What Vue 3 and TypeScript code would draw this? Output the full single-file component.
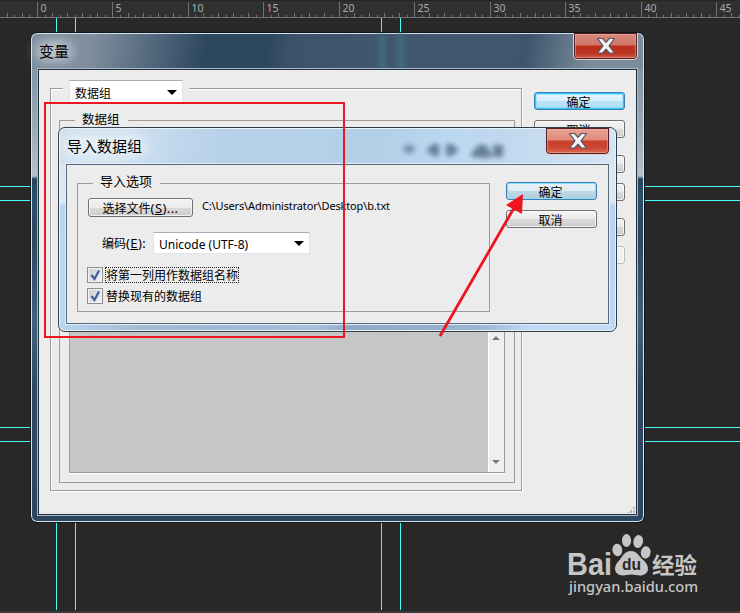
<script setup lang="ts">
import { ref } from 'vue';

interface Tick {
  x: number;
  y: number;
  label?: string;
}

const UNIT = 15.09;
const ORIGIN = 37.5;

const ticks: Tick[] = [];
for (let i = -4; i <= 93; i++) {
  const x = Math.floor(ORIGIN + (i * UNIT) / 2) + 0.5;
  if (i >= 0 && i % 10 === 0) {
    ticks.push({ x, y: 1, label: String(i / 2) });
  } else {
    ticks.push({ x, y: i % 2 === 0 ? 12 : 14 });
  }
}

const columns = [56, 75, 381, 400];
const rows = [186, 200, 427, 441];

const useFirstColumn = ref(true);
const replaceExisting = ref(true);
</script>

<template>
  <div class="desktop">
    <svg class="ruler" width="740" height="18">
      <g v-for="tick in ticks" :key="tick.x">
        <line :x1="tick.x" :x2="tick.x" :y1="tick.y" y2="17" stroke="#737373" />
        <text v-if="tick.label" :x="tick.x + 3" y="11">{{ tick.label }}</text>
      </g>
    </svg>

    <i v-for="x in columns" :key="'c' + x" class="guide guide-v" :style="{ left: x + 'px' }" />
    <i v-for="y in rows" :key="'r' + y" class="guide guide-h" :style="{ top: y + 'px' }" />

    <section class="window variables">
      <i class="glow glow-a" />
      <i class="glow glow-b" />
      <header class="titlebar"><i class="halo" /><span>变量</span></header>
      <button class="close" aria-label="close">
        <svg width="20" height="18" viewBox="0 0 20 18">
          <path d="M1.5 1.5h5.2L10 5.4l3.300-3.900h5.200L13 8.800l5.500 7.200h-5.200L10 12.100 6.700 16H1.500L7 8.800z" fill="#f4f4f4" stroke="#545465" stroke-width="1.200" stroke-linejoin="round" />
        </svg>
      </button>
      <div class="client">
        <div class="group group-outer">
          <div class="legend legend-select">
            <div class="select">数据组<i class="caret" /></div>
          </div>
          <div class="group group-inner">
            <div class="legend legend-inner">数据组</div>
            <div class="list">
              <div class="list-body" />
              <div class="scrollbar">
                <i class="arrow-up" />
                <i class="arrow-down" />
              </div>
            </div>
          </div>
        </div>
        <div class="actions">
          <button class="btn btn-active">确定</button>
          <button class="btn">取消</button>
          <button class="btn spaced" />
          <button class="btn" />
          <button class="btn spaced" />
          <button class="btn" disabled />
        </div>
        <svg class="grip" width="16" height="16">
          <path d="M13 9h2v2h-2zM10 12h2v2h-2zM13 12h2v2h-2zM7 14h2v1h-2zM10 14h2v1h-2zM13 14h2v1h-2z" fill="#b9b9b9" />
        </svg>
      </div>
    </section>

    <section class="window import">
      <svg class="smudges" width="140" height="34">
        <g fill="#5d7690">
          <path d="M19 20l4-4h6l4 4-4 4h-6z" opacity=".8" />
          <path d="M43 21l7-6h6v12h-6zM76 21l-7-6h-6v12h6z" />
          <path d="M88 24l9-9 7 2 6 11-9 1-12-1zM110 16h10v12h-10z" />
        </g>
      </svg>
      <header class="titlebar"><i class="halo" /><span>导入数据组</span></header>
      <button class="close" aria-label="close">
        <svg width="20" height="18" viewBox="0 0 20 18">
          <path d="M1.5 1.5h5.2L10 5.4l3.300-3.900h5.200L13 8.800l5.500 7.200h-5.200L10 12.100 6.700 16H1.500L7 8.800z" fill="#f4f4f4" stroke="#545465" stroke-width="1.200" stroke-linejoin="round" />
        </svg>
      </button>
      <div class="client">
        <div class="group group-import">
          <div class="legend legend-import">导入选项</div>
          <div class="row file-row">
            <button class="btn btn-file">选择文件<b>(<u>S</u>)...</b></button>
            <span class="path">C:\Users\Administrator\Desktop\b.txt</span>
          </div>
          <div class="row encoding-row">
            <span class="label">编码<b>(<u>E</u>):</b></span>
            <div class="select">Unicode (UTF-8)<i class="caret" /></div>
          </div>
          <label class="row check-row">
            <input v-model="useFirstColumn" type="checkbox">
            <svg class="box" width="16" height="16"><path v-if="useFirstColumn" d="M3.500 7l3 4L11 2.500" /></svg>
            <span class="focused">将第一列用作数据组名称</span>
          </label>
          <label class="row check-row second">
            <input v-model="replaceExisting" type="checkbox">
            <svg class="box" width="16" height="16"><path v-if="replaceExisting" d="M3.500 7l3 4L11 2.500" /></svg>
            <span>替换现有的数据组</span>
          </label>
        </div>
        <div class="actions">
          <button class="btn btn-hot">确定</button>
          <button class="btn">取消</button>
        </div>
      </div>
    </section>

    <svg class="marks" width="740" height="613">
      <rect x="45" y="103" width="299" height="234" fill="none" stroke="#ed1520" stroke-width="2" />
      <path d="M440 336L514 208" stroke="#ed1520" stroke-width="2.800" />
      <path d="M523 194l-17 11 16 9z" fill="#ed1520" />
    </svg>

    <svg class="watermark" width="140" height="70">
      <g fill="#c6c6c6">
        <text x="1" y="42.500" class="brand" textLength="45" lengthAdjust="spacingAndGlyphs">Bai</text>
        <ellipse cx="51.300" cy="18" rx="4.900" ry="6.300" transform="rotate(-8 51 18)" />
        <ellipse cx="60.500" cy="8.500" rx="4.600" ry="6.500" />
        <ellipse cx="72.200" cy="9.500" rx="4.800" ry="6.500" transform="rotate(12 72 9.500)" />
        <ellipse cx="79.700" cy="20.500" rx="4.900" ry="6.200" transform="rotate(8 80 20)" />
        <path d="M65 19c6 0 8 5 11 8 4 3 6 6 6 10 0 4-4 6.500-8 6.500-3 0-5-1-8.500-1s-5.500 1-8.500 1c-5 0-8-3-8-7 0-3 2-6 5-9 3-4 5-8.500 11-8.500z" />
        <text x="56" y="38" class="du" textLength="19" lengthAdjust="spacingAndGlyphs">du</text>
        <text x="86" y="41" class="cn" textLength="45" lengthAdjust="spacingAndGlyphs">经验</text>
        <text x="3" y="60" class="site" textLength="129" lengthAdjust="spacingAndGlyphs">jingyan.baidu.com</text>
      </g>
    </svg>
  </div>
</template>

<style>
body {
  margin: 0;
  background: #282828;
}
</style>

<style scoped>
.desktop {
  position: relative;
  box-sizing: border-box;
  width: 740px;
  height: 613px;
  overflow: hidden;
  background: #282828;
  border-bottom: 2px solid #393737;
  font-family: "Noto Sans", "Noto Sans CJK SC", sans-serif;
  font-size: 12px;
  color: #000;
}

.desktop * {
  box-sizing: border-box;
}

.ruler {
  display: block;
  background: #303030;
  border-top: 1px solid #262626;
  border-bottom: 1px solid #737373;
}

.ruler text {
  font: 10.5px "Noto Sans", sans-serif;
  fill: #ababab;
}

.guide {
  position: absolute;
  background: #48fafa;
}

.guide-v {
  top: 18px;
  width: 1px;
  height: 592px;
}

.guide-h {
  left: 0;
  width: 740px;
  height: 1px;
}

.window {
  position: absolute;
  display: flex;
  flex-direction: column;
  border: 1px solid #0c141c;
  border-radius: 7px;
}

.variables {
  left: 30px;
  top: 32px;
  width: 615px;
  height: 491px;
  box-shadow: inset 0 0 0 1px #d5e3ee;
  background:
    linear-gradient(100deg, #7b8c9d 0, #808f9e 60px, #6a7c8f 90px, #2d475f 175px, #2d475f 235px, #3c536b 260px, #43586f 400px, #43586f 470px, #3d546c 490px, #7b8c9c 555px, #7b8c9c 100%) 0 0 / 100% 36px no-repeat,
    linear-gradient(#76889a 0, #9aa9b6 95px, #b5c0ca 143px, #24455c 146px, #2c5069 165px, #2b465f 200px, #41617d 290px, #2d4760 360px, #2c465f 100%);
}

.import {
  left: 58px;
  top: 127px;
  width: 559px;
  height: 205px;
  border-color: #303e4c;
  box-shadow: inset 0 0 0 1px #e7f4fd;
  background:
    linear-gradient(100deg, #d0e1f0 0, #d0e1f0 65px, #c0d8ed 115px, #b6d0e8 170px, #b4d0e9 320px, #bdd8f1 400px, #c0d7ee 440px, #d5e6f3 100%) 0 0 / 100% 36px no-repeat,
    linear-gradient(90deg, #b8d4ef 0, #a4bdd5 80px, #9fbad4 150px, #a7c1db 260px, #8eaac5 290px, #9ab5d0 420px, #bfdaf4 470px, #c2dcf5 100%) 0 100% / 100% 8px no-repeat,
    linear-gradient(#d3e2ef 0, #e1e9f1 74px, #b9d4ef 77px, #bcd7f2 100%);
}

.glow {
  position: absolute;
  top: 1px;
  width: 8px;
  height: 34px;
  background: #3f7086;
  opacity: 0.75;
  filter: blur(2px);
}

.glow-a {
  left: 347px;
}

.glow-b {
  left: 366px;
}

.smudges {
  position: absolute;
  left: 324px;
  top: 1px;
  opacity: 0.9;
  filter: blur(2.5px);
}

.titlebar {
  position: relative;
  flex: none;
  height: 36px;
  padding: 6px 0 0 8px;
  font-size: 15px;
  line-height: 24px;
}

.titlebar span {
  position: relative;
}

.halo {
  position: absolute;
  left: 4px;
  top: 8px;
  width: 38px;
  height: 20px;
  border-radius: 10px;
  background: rgba(255, 255, 255, 0.5);
  filter: blur(6px);
}

.import .halo {
  width: 84px;
}

.close {
  position: absolute;
  top: 0;
  right: 6px;
  display: flex;
  align-items: center;
  justify-content: center;
  width: 65px;
  height: 27px;
  padding: 0;
  border: 1px solid #eccfcb;
  border-top: 0;
  border-radius: 0 0 5px 5px;
  background: linear-gradient(#d98b80 0, #cf7567 12px, #b92f1b 13px, #bd3320 20px, #cb604e 100%);
  box-shadow: inset 0 0 0 1px #4e2023, inset 0 0 0 2px rgba(245, 180, 165, 0.5);
}

.import .close {
  background: linear-gradient(#eaa496 0, #e08a7a 12px, #c93f2a 13px, #cd4631 20px, #dd7561 100%);
}

.client {
  position: relative;
  display: flex;
  flex: 1;
  align-items: flex-start;
  margin: 0 7px 7px;
  border: 1px solid #22303e;
  background: #ececec;
  box-shadow: 0 0 0 1px #a9b7c4;
}

.variables .client {
  gap: 12px;
  padding: 18px 0 0 11px;
}

.import .client {
  gap: 16px;
  padding: 18px 0 0 10px;
  border-color: #56687b;
  box-shadow: 0 0 0 1px #e2effa;
}

.group {
  display: flex;
  flex: none;
  flex-direction: column;
  align-items: flex-start;
  border: 1px solid #9c9c9c;
}

.group-outer {
  width: 472px;
  height: 403px;
  box-shadow: 1px 1px 0 #fff, inset 1px 1px 0 #fff;
}

.group-inner {
  width: 456px;
  height: 363px;
  margin: 18px 0 0 8px;
}

.group-import {
  width: 413px;
  height: 129px;
}

.legend {
  flex: none;
  background: #ececec;
}

.legend-select {
  width: 126px;
  margin: -9px 0 0 12px;
  padding: 0 6px;
}

.legend-inner {
  width: 53px;
  height: 16px;
  margin: -9px 0 0 15px;
  padding-left: 7px;
  font-size: 12.5px;
  line-height: 16px;
}

.legend-import {
  width: 67px;
  height: 16px;
  margin: -10px 0 0 15px;
  padding-left: 7px;
  font-size: 13px;
  line-height: 15px;
}

.select {
  display: flex;
  align-items: center;
  justify-content: space-between;
  height: 22px;
  padding: 2px 5px 0 5px;
  border: 1px solid #e0e3ea;
  border-top-color: #abadb3;
  background: #fff;
}

.legend-select .select {
  height: 24px;
  margin-bottom: -2px;
}

.caret {
  margin-top: -2px;
  border: 5px solid transparent;
  border-top-color: #000;
  border-bottom: 0;
}

.list {
  display: flex;
  width: 436px;
  height: 334px;
  margin: 11px 0 0 9px;
  border: 1px solid #9c9c9c;
  box-shadow: 0 1px 0 #fff;
}

.list-body {
  flex: 1;
  background: #c6c6c6;
}

.scrollbar {
  display: flex;
  flex-direction: column;
  align-items: center;
  justify-content: space-between;
  width: 16px;
  padding: 196px 1px 8px 0;
  border-left: 1px solid #fff;
  background: #efefef;
}

.arrow-up,
.arrow-down {
  border: 4px solid transparent;
}

.arrow-up {
  border-top: 0;
  border-bottom-color: #7a7a7a;
}

.arrow-down {
  border-bottom: 0;
  border-top-color: #7a7a7a;
}

.actions {
  display: flex;
  flex-direction: column;
  gap: 10px;
}

.variables .actions {
  margin-top: 4px;
}

.import .actions {
  margin-top: -1px;
}

.spaced {
  margin-top: 7px;
}

.btn {
  flex: none;
  width: 91px;
  height: 18px;
  padding: 1px 2px 0 0;
  border: 1px solid #707070;
  border-radius: 3px;
  background: linear-gradient(#f3f3f3 0, #ebebeb 50%, #dadada 51%, #cdcdcd 100%);
  box-shadow: inset 0 0 0 1px rgba(255, 255, 255, 0.7);
  color: #000;
  font: inherit;
  line-height: 17px;
}

.btn:disabled {
  border-color: #bcbfc0;
  background: #f1f1f1;
}

.btn-active {
  border-color: #3c7fb1;
  background: linear-gradient(#e4f3fd 0, #d9effc 50%, #bee3f8 51%, #aedcf5 100%);
  box-shadow: inset 0 0 0 1px #2dc5fa, inset 0 0 0 2px rgba(120, 222, 255, 0.6);
}

.btn-hot {
  border-color: #3c7fb1;
  background: linear-gradient(#e9f1f5 0, #dcebf2 50%, #bfd9e5 51%, #b0cedc 100%);
  box-shadow: inset 0 0 0 1px #8fdef5;
}

.btn-file {
  width: 105px;
  height: 19px;
  padding-right: 0;
  line-height: 16px;
}

.btn-file b,
.label b {
  font-size: 13px;
  font-weight: 400;
  letter-spacing: 0.4px;
}

.row {
  display: flex;
  align-items: center;
}

.file-row {
  gap: 9px;
  height: 19px;
  margin: 8px 0 0 10px;
}

.path {
  margin-top: -5px;
  font-size: 11px;
  letter-spacing: -0.15px;
  white-space: nowrap;
}

.encoding-row {
  margin: 15px 0 0 24px;
}

.encoding-row .label {
  width: 51px;
  white-space: nowrap;
}

.encoding-row .select {
  width: 157px;
}

.check-row {
  gap: 2px;
  height: 16px;
  margin: 13px 0 0 9px;
}

.check-row.second {
  margin-top: 5px;
}

.check-row input {
  display: none;
}

.check-row span {
  height: 16px;
  padding: 0 1px;
  line-height: 17px;
  white-space: nowrap;
}

.check-row .focused {
  outline: 1px dotted #222;
  outline-offset: -1px;
}

.box {
  border: 1px solid #8e8f8f;
  background: linear-gradient(135deg, #c8ccd2, #f6f6f6);
  box-shadow: inset 0 0 0 1px #f4f4f4;
}

.box path {
  fill: none;
  stroke: #415d9f;
  stroke-width: 2.2;
}

.grip {
  position: absolute;
  right: 0;
  bottom: 0;
}

.marks {
  position: absolute;
  left: 0;
  top: 0;
  pointer-events: none;
}

.watermark {
  position: absolute;
  left: 566px;
  top: 532px;
}

.brand {
  font: bold 31px "Liberation Sans", sans-serif;
}

.du {
  font: bold 17px "Liberation Sans", sans-serif;
  fill: #282828;
}

.cn {
  font: bold 22px "Noto Sans CJK SC", sans-serif;
}

.site {
  font: 500 15px "Noto Sans", sans-serif;
}
</style>
